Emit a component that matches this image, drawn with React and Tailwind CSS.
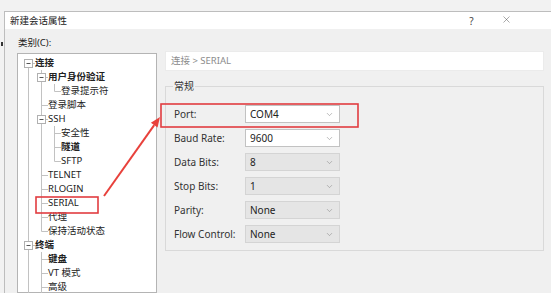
import { ChevronDown, X } from 'lucide-react'

// cell codes: I = vertical through, T = tee, L = elbow, R = root start, ' ' = empty
const TREE = [
  { text: '连接', cells: ['R'], box: true, bold: true },
  { text: '用户身份验证', cells: ['I', 'T'], box: true, bold: true },
  { text: '登录提示符', cells: ['I', 'I', 'L'] },
  { text: '登录脚本', cells: ['I', 'T'] },
  { text: 'SSH', cells: ['I', 'T'], box: true },
  { text: '安全性', cells: ['I', 'I', 'T'] },
  { text: '隧道', cells: ['I', 'I', 'T'], bold: true },
  { text: 'SFTP', cells: ['I', 'I', 'L'] },
  { text: 'TELNET', cells: ['I', 'T'] },
  { text: 'RLOGIN', cells: ['I', 'T'] },
  { text: 'SERIAL', cells: ['I', 'T'] },
  { text: '代理', cells: ['I', 'T'] },
  { text: '保持活动状态', cells: ['I', 'L'] },
  { text: '终端', cells: ['T'], box: true, bold: true },
  { text: '键盘', cells: ['I', 'T'], bold: true },
  { text: 'VT 模式', cells: ['I', 'T'] },
  { text: '高级', cells: ['I', 'T'] },
]

const FIELDS = [
  { label: 'Port:', value: 'COM4' },
  { label: 'Baud Rate:', value: '9600' },
  { label: 'Data Bits:', value: '8', off: true },
  { label: 'Stop Bits:', value: '1', off: true },
  { label: 'Parity:', value: 'None', off: true },
  { label: 'Flow Control:', value: 'None', off: true },
]

function TreeCell({ code, box }) {
  const c = '#c2c2c2'
  return (
    <svg width="13" height="14" className="shrink-0">
      {(code === 'I' || code === 'T') && <line x1="6.5" y1="0" x2="6.5" y2="14" stroke={c} />}
      {code === 'L' && <line x1="6.5" y1="0" x2="6.5" y2="7.5" stroke={c} />}
      {code === 'R' && <line x1="6.5" y1="7.5" x2="6.5" y2="14" stroke={c} />}
      {code !== 'I' && code !== ' ' && <line x1="6.5" y1="7.5" x2="13" y2="7.5" stroke={c} />}
      {box && (
        <>
          <rect x="2.5" y="3.5" width="8" height="8" fill="#fff" stroke="#b0b0b0" />
          <line x1="4.5" y1="7.5" x2="8.5" y2="7.5" stroke="#555" />
        </>
      )}
    </svg>
  )
}

function Combo({ value, off }) {
  return (
    <div
      className={
        'w-[95px] h-[18px] border flex items-center justify-between pl-[4px] pr-[5px] text-[10px] ' +
        (off ? 'bg-[#e5e5e5] border-[#d4d4d4]' : 'bg-white border-[#c2c2c2]')
      }
    >
      <span>{value}</span>
      <ChevronDown size={9} strokeWidth={1.5} className="text-[#8a8a8a]" />
    </div>
  )
}

export default function App() {
  return (
    <div className="relative w-[551px] h-[293px] overflow-hidden bg-[#f2f2f2] text-[#222] font-['Noto_Sans','Noto_Sans_CJK_SC',sans-serif]">
      <div className="h-[11px]" />
      <div className="flex h-[282px]">
        <div className="w-[4px] pt-[31px] pl-[1px]">
          <div className="w-[2px] h-[4px] bg-[#333]" />
        </div>
        <div className="flex-1 flex flex-col border-l border-t border-[#bdbdbd] bg-[#f0f0f0]">
          <div className="h-[22px] bg-white flex items-center justify-between pl-[5px] pr-[27px] pt-[2px]">
            <span className="text-[9.5px]">新建会话属性</span>
            <div className="flex">
              <span className="w-[35px] text-center text-[10px] text-[#444]">?</span>
              <span className="w-[35px] flex justify-center text-[#444]">
                <X size={11} strokeWidth={1} />
              </span>
            </div>
          </div>

          <div className="flex gap-[8px] pl-[12px]">
            <div className="w-[140px] flex flex-col">
              <div className="pt-[7px] h-[20px] leading-[13px] text-[9.5px] pl-[1px]">类别(C):</div>
              <div className="mt-[4px] h-[240px] bg-white border border-[#b4b4b4] pl-[4px] pt-[2px] text-[9.5px]">
                {TREE.map((row, i) => (
                  <div key={i} className="flex h-[14px] items-center">
                    {row.cells.map((code, j) => (
                      <TreeCell key={j} code={code} box={row.box && j === row.cells.length - 1} />
                    ))}
                    <span className={'leading-[14px] whitespace-nowrap ' + (row.bold ? 'font-bold' : '')}>
                      {row.text}
                    </span>
                  </div>
                ))}
              </div>
            </div>

            <div className="w-[379px] pt-[22px]">
              <div className="h-[20px] bg-white border border-[#ebebeb] flex items-center pl-[5px] text-[9.5px] text-[#8c8c8c]">
                连接 &gt; SERIAL
              </div>
              <fieldset className="mt-[8px] h-[172px] border border-[#d9d9d9]">
                <legend className="ml-[7px] px-[1px] text-[10px] leading-[14px] text-[#333]">常规</legend>
                <div className="mt-[12px] pl-[8px] flex flex-col gap-[6px]">
                  {FIELDS.map((f) => (
                    <div key={f.label} className="flex items-center h-[18px]">
                      <span className="w-[71px] text-[10px] text-[#333]">{f.label}</span>
                      <Combo value={f.value} off={f.off} />
                    </div>
                  ))}
                </div>
              </fieldset>
            </div>
          </div>
        </div>
      </div>

      <svg className="absolute inset-0 pointer-events-none" width="551" height="293">
        <rect x="161" y="104" width="197" height="23" fill="none" stroke="#e13c40" strokeWidth="1.6" />
        <rect x="36" y="197" width="62" height="16" fill="none" stroke="#e13c40" strokeWidth="1.6" />
        <line x1="104" y1="196" x2="154.2" y2="125.1" stroke="#e8413b" strokeWidth="2" />
        <polygon points="160,117 157.5,127.4 150.9,122.8" fill="#e8413b" />
      </svg>
    </div>
  )
}
